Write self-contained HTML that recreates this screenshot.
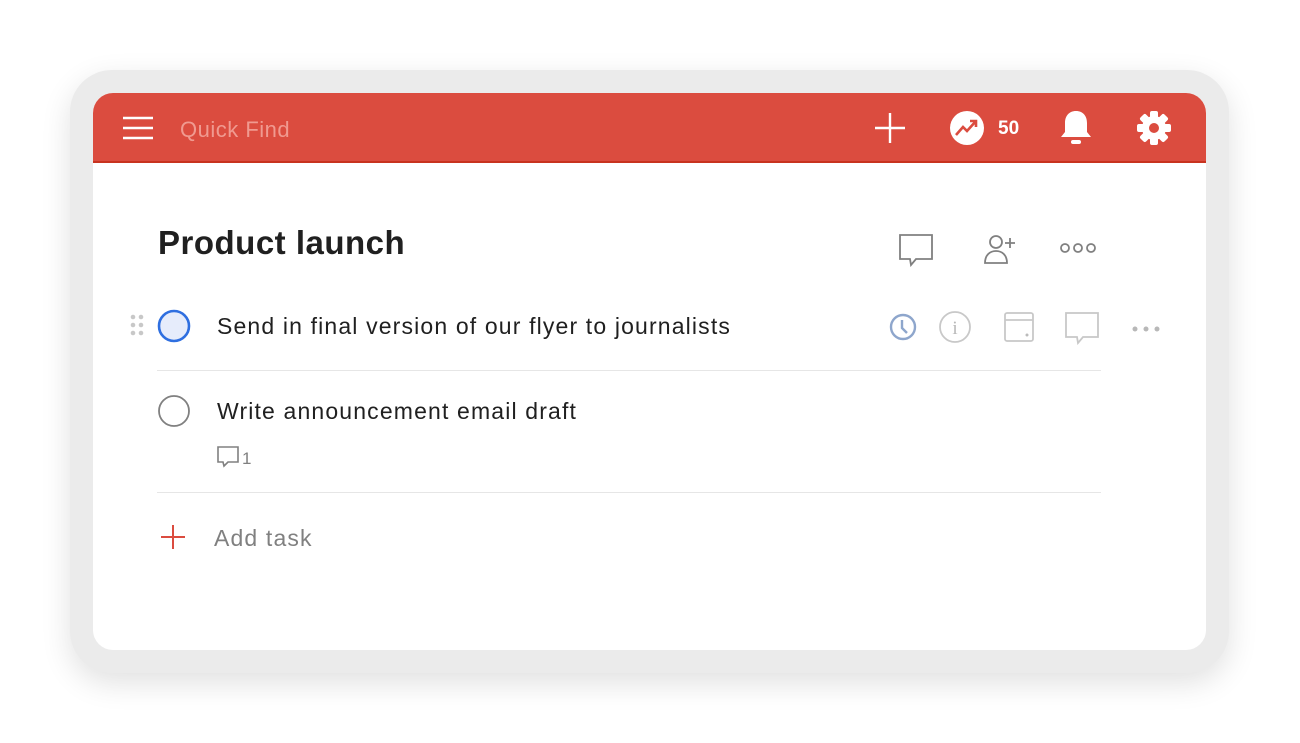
<!DOCTYPE html>
<html><head><meta charset="utf-8"><style>
*{margin:0;padding:0;box-sizing:border-box}
body{width:1300px;height:743px;background:#fff;position:relative;overflow:hidden;font-family:"Liberation Sans",sans-serif}
.frame{position:absolute;left:70px;top:70px;width:1159px;height:603px;background:#ebebeb;border-radius:42px;box-shadow:0 10px 30px rgba(0,0,0,0.12)}
.card{position:absolute;left:93px;top:93px;width:1113px;height:557px;background:#fff;border-radius:20px;overflow:hidden}
.hdr{position:absolute;left:0;top:0;width:1113px;height:70px;background:#db4c3f;border-bottom:2px solid #c8331f}
.abs{position:absolute}
.t{position:absolute;color:#202020;font-size:23px;letter-spacing:1.15px;white-space:nowrap}
.line{position:absolute;left:64px;width:944px;height:1px;background:#e6e6e6}
</style></head><body>
<div class="frame"></div>
<div class="card">
 <div class="hdr">
  <svg class="abs" style="left:28px;top:22px" width="34" height="26"><g stroke="#fff" stroke-width="2.4"><line x1="2" y1="3" x2="32" y2="3"/><line x1="2" y1="13" x2="32" y2="13"/><line x1="2" y1="23" x2="32" y2="23"/></g></svg>
  <div class="abs" style="left:87px;top:24px;color:#f09a90;font-size:22px;letter-spacing:0.5px">Quick Find</div>
  <svg class="abs" style="left:780px;top:18px" width="34" height="34"><g stroke="#fff" stroke-width="2.4"><line x1="17" y1="2" x2="17" y2="32"/><line x1="2" y1="17" x2="32" y2="17"/></g></svg>
  <svg class="abs" style="left:856px;top:17px" width="36" height="36"><circle cx="18" cy="18" r="17" fill="#fff"/><path d="M7 25 L14 17 L18 21 L27 11 M21 11 L27 11 L27 17" stroke="#db4c3f" stroke-width="2.6" fill="none"/></svg>
  <div class="abs" style="left:905px;top:25px;color:#fff;font-size:19px;font-weight:bold">50</div>
  <svg class="abs" style="left:966px;top:16px" width="34" height="38"><path d="M17 2c-7 0-11 5-11 12v9l-4 5h30l-4-5v-9c0-7-4-12-11-12z" fill="#fff"/><rect x="12" y="31" width="10" height="4" rx="2" fill="#fff"/></svg>
  <svg class="abs" style="left:1043px;top:17px" width="36" height="36" viewBox="0 0 36 36"><g fill="#fff"><circle cx="18" cy="18" r="12"/><g><rect x="14" y="1" width="8" height="9" rx="2"/><rect x="14" y="26" width="8" height="9" rx="2"/><rect x="1" y="14" width="9" height="8" rx="2"/><rect x="26" y="14" width="9" height="8" rx="2"/></g><g transform="rotate(45 18 18)"><rect x="14" y="1" width="8" height="9" rx="2"/><rect x="14" y="26" width="8" height="9" rx="2"/><rect x="1" y="14" width="9" height="8" rx="2"/><rect x="26" y="14" width="9" height="8" rx="2"/></g></g><circle cx="18" cy="18" r="5" fill="#db4c3f"/></svg>
 </div>
 <div class="abs" style="left:65px;top:131px;font-size:33px;letter-spacing:0.5px;font-weight:bold;color:#202020">Product launch</div>
 <svg class="abs" style="left:804px;top:140px" width="38" height="34"><path d="M3 2h32v24H19l-5 6-1-6H3z" fill="none" stroke="#808080" stroke-width="1.8"/></svg>
 <svg class="abs" style="left:890px;top:140px" width="36" height="32"><circle cx="13" cy="9" r="6" fill="none" stroke="#808080" stroke-width="1.8"/><path d="M2 30c0-8 5-12 11-12s11 4 11 12z" fill="none" stroke="#808080" stroke-width="1.8"/><path d="M27 5v10M22 10h10" stroke="#808080" stroke-width="1.8"/></svg>
 <svg class="abs" style="left:966px;top:148px" width="40" height="14"><g fill="none" stroke="#808080" stroke-width="1.8"><circle cx="6" cy="7" r="4"/><circle cx="19" cy="7" r="4"/><circle cx="32" cy="7" r="4"/></g></svg>

 <svg class="abs" style="left:36px;top:220px" width="16" height="26"><g fill="#c8c8c8"><circle cx="4" cy="4" r="2.3"/><circle cx="12" cy="4" r="2.3"/><circle cx="4" cy="12" r="2.3"/><circle cx="12" cy="12" r="2.3"/><circle cx="4" cy="20" r="2.3"/><circle cx="12" cy="20" r="2.3"/></g></svg>
 <svg class="abs" style="left:64px;top:216px" width="34" height="34"><circle cx="17" cy="17" r="15" fill="#e6ecfb" stroke="#2f6fe0" stroke-width="2.6"/></svg>
 <div class="t" style="left:124px;top:220px">Send in final version of our flyer to journalists</div>
 <svg class="abs" style="left:795px;top:219px" width="30" height="30"><circle cx="15" cy="15" r="12" fill="none" stroke="#8ea6cc" stroke-width="2.4"/><path d="M14 8v8l5 5" fill="none" stroke="#8ea6cc" stroke-width="2.4"/></svg>
 <svg class="abs" style="left:845px;top:217px" width="34" height="34"><circle cx="17" cy="17" r="15" fill="none" stroke="#c8c8c8" stroke-width="1.8"/><text x="17" y="24" text-anchor="middle" font-family="Liberation Serif,serif" font-size="19" fill="#b8b8b8">i</text></svg>
 <svg class="abs" style="left:910px;top:218px" width="32" height="32"><rect x="2" y="2" width="28" height="28" rx="2" fill="none" stroke="#c8c8c8" stroke-width="1.8"/><line x1="2" y1="9" x2="30" y2="9" stroke="#c8c8c8" stroke-width="1.8"/><circle cx="24" cy="24" r="1.5" fill="#bbb"/></svg>
 <svg class="abs" style="left:971px;top:218px" width="36" height="34"><path d="M2 2h32v24H19l-5 6-1-6H2z" fill="none" stroke="#c8c8c8" stroke-width="1.8"/></svg>
 <svg class="abs" style="left:1038px;top:232px" width="32" height="8"><g fill="#b8b8b8"><circle cx="4" cy="4" r="2.5"/><circle cx="15" cy="4" r="2.5"/><circle cx="26" cy="4" r="2.5"/></g></svg>
 <div class="line" style="top:277px"></div>

 <svg class="abs" style="left:64px;top:301px" width="34" height="34"><circle cx="17" cy="17" r="15" fill="none" stroke="#808080" stroke-width="1.8"/></svg>
 <div class="t" style="left:124px;top:305px">Write announcement email draft</div>
 <svg class="abs" style="left:123px;top:352px" width="24" height="24"><path d="M2 2h20v15h-10l-4 4-1-4H2z" fill="none" stroke="#808080" stroke-width="1.6"/></svg>
 <div class="abs" style="left:149px;top:356px;font-size:17px;color:#808080">1</div>
 <div class="line" style="top:399px"></div>

 <svg class="abs" style="left:66px;top:430px" width="28" height="28"><g stroke="#db4c3f" stroke-width="2"><line x1="14" y1="2" x2="14" y2="26"/><line x1="2" y1="14" x2="26" y2="14"/></g></svg>
 <div class="t" style="left:121px;top:432px;color:#808080">Add task</div>
</div>
</body></html>
